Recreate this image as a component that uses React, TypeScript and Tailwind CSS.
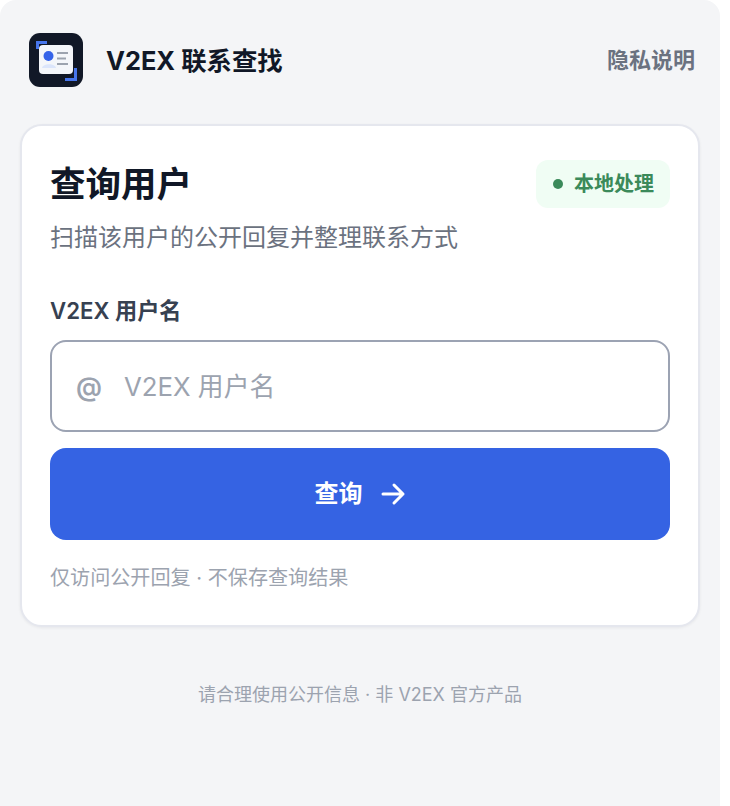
export default function App() {
  return (
    <div className="h-[806px] w-[720px] rounded-t-[16px] bg-[#f4f5f7] px-[20px] font-[family-name:Inter,'Noto_Sans_CJK_SC',sans-serif]">
      <header className="flex h-[124px] items-center justify-between pb-[3px] pl-[8px] pr-[5px]">
        <div className="flex items-center gap-[22px]">
          <svg width="56" height="56" viewBox="0 0 56 56" className="mb-[1px] shrink-0">
            <rect x="1" y="1" width="54" height="54" rx="11" fill="#111827" />
            <path d="M9.5 17V10.5H19" fill="none" stroke="#4776ec" strokeWidth="3" />
            <path d="M47.5 36v11.5H37" fill="none" stroke="#4776ec" strokeWidth="3" />
            <rect x="11" y="13" width="34" height="29" rx="4" fill="#f4f6fa" />
            <circle cx="20.5" cy="24" r="5" fill="#3563e9" />
            <path d="M14 36c1-5 13-5 14 0z" fill="#dbe5fb" />
            <path d="M29 21h11M29 26.5h9M29 32h11" stroke="#9ca3af" strokeWidth="2" />
          </svg>
          <h1 className="text-[25.4px] font-bold leading-none text-[#111827]">V2EX 联系查找</h1>
        </div>
        <span className="text-[22px] font-semibold text-[#6b7280]">隐私说明</span>
      </header>
      <main className="box-border h-[503px] rounded-[22px] border-2 border-[#e5e7ee] bg-white px-[28px] pt-[34px] shadow-[0_1px_3px_rgba(17,24,39,0.06)]">
        <div className="flex items-start justify-between">
          <div>
            <h2 className="pt-[1px] text-[35.5px] font-bold leading-[48px] text-[#111827]">查询用户</h2>
            <p className="mt-[11px] text-[24px] leading-[36px] text-[#6b7280]">扫描该用户的公开回复并整理联系方式</p>
          </div>
          <div className="flex h-[48px] items-center gap-[11px] rounded-[12px] bg-[#f0fdf4] pl-[17px] pr-[16px]">
            <span className="h-[10px] w-[10px] rounded-full bg-[#3b8a5a]" />
            <span className="text-[20px] font-semibold text-[#3b8a5a]">本地处理</span>
          </div>
        </div>
        <label className="mt-[39px] block text-[22.2px] font-semibold leading-[32px] text-[#374151]">V2EX 用户名</label>
        <div className="mt-[13px] flex h-[92px] items-center gap-[22px] rounded-[16px] border-2 border-[#9ca3b3] px-[24px] text-[#9ca3af]">
          <span className="text-[26px] font-semibold">@</span>
          <span className="pt-[2px] text-[25.8px]">V2EX 用户名</span>
        </div>
        <button className="mt-[16px] flex h-[92px] w-full items-center justify-center gap-[17px] rounded-[16px] bg-[#3563e3] text-[24px] font-bold text-white">
          查询
          <svg width="26" height="26" viewBox="0 0 26 26" fill="none" stroke="white" strokeWidth="3" strokeLinecap="round" strokeLinejoin="round">
            <path d="M3 13h20M14 4l9 9-9 9" />
          </svg>
        </button>
        <p className="mt-[22px] text-[20.1px] leading-[32px] text-[#9ca3af]">仅访问公开回复 · 不保存查询结果</p>
      </main>
      <footer className="mt-[54px] text-center text-[18px] leading-[28px] text-[#9ca3af]">请合理使用公开信息 · 非 V2EX 官方产品</footer>
    </div>
  );
}
